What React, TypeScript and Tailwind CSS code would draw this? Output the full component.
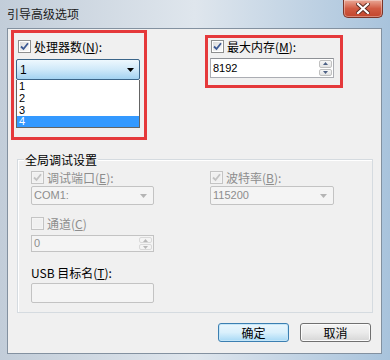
import React from "react";

interface CheckProps {
  checked?: boolean;
  disabled?: boolean;
}

// Win7 style checkbox, 13x13
function CheckBox({ checked, disabled }: CheckProps) {
  return (
    <div
      className={`w-[13px] h-[13px] shrink-0 border p-[1px] ${
        disabled ? "border-[#c4c4c4] bg-[#f4f4f4]" : "border-[#8e8f8f] bg-white"
      }`}
    >
      <div
        className={`w-full h-full ${
          disabled ? "bg-[#f0f0f0]" : "bg-gradient-to-br from-[#dcdcdc] to-[#fbfbfb]"
        }`}
      >
        {checked && (
          <svg width="9" height="9" viewBox="0 0 9 9">
            <path
              d="M1 4.5 L3.5 7 L8 1.2"
              fill="none"
              stroke={disabled ? "#c2c2c2" : "#3d5a94"}
              strokeWidth="1.8"
            />
          </svg>
        )}
      </div>
    </div>
  );
}

function Spinner({ disabled }: { disabled?: boolean }) {
  const arrow = disabled ? "#b8b8b8" : "#4d6185";
  return (
    <div className="w-[15px] h-full flex flex-col gap-[1px] p-[1px] shrink-0">
      <div
        className={`flex-1 flex items-center justify-center border rounded-[2px] ${
          disabled ? "border-[#d9d9d9] bg-[#f4f4f4]" : "border-[#c0c0c0] bg-gradient-to-b from-[#f7f7f7] to-[#e3e3e3]"
        }`}
      >
        <svg width="5" height="3" viewBox="0 0 5 3">
          <path d="M0 3 L2.5 0 L5 3 Z" fill={arrow} />
        </svg>
      </div>
      <div
        className={`flex-1 flex items-center justify-center border rounded-[2px] ${
          disabled ? "border-[#d9d9d9] bg-[#f4f4f4]" : "border-[#c0c0c0] bg-gradient-to-b from-[#f7f7f7] to-[#e3e3e3]"
        }`}
      >
        <svg width="5" height="3" viewBox="0 0 5 3">
          <path d="M0 0 L2.5 3 L5 0 Z" fill={arrow} />
        </svg>
      </div>
    </div>
  );
}

function DisabledCombo({ value, width }: { value: string; width: string }) {
  return (
    <div
      className={`${width} h-[19px] mt-[2px] flex items-center border border-[#c3c3c3] rounded-[2px] bg-[#f4f4f4] pl-[2px] pr-[6px]`}
    >
      <span className="text-[#8d8d8d] font-['Liberation_Sans',sans-serif] text-[11px] leading-[13px]">
        {value}
      </span>
      <svg className="ml-auto" width="7" height="4" viewBox="0 0 7 4">
        <path d="M0 0 L7 0 L3.5 4 Z" fill="#b4b4b4" />
      </svg>
    </div>
  );
}

export default function App() {
  return (
    <div className="w-[390px] h-[360px] overflow-hidden flex flex-col bg-gradient-to-r from-[#c2cdd9] via-[#dfe6ed] to-[#a8c3dc] font-['Noto_Sans_CJK_SC',sans-serif] text-[12px] text-black">
      {/* title bar */}
      <div className="h-[28px] shrink-0 flex items-start">
        <div className="pl-[7px] pt-[6px] leading-[15px] text-[12px] text-[#1a1a1a]">引导高级选项</div>
        <div className="ml-auto mr-[7px] w-[40px] h-[18px] rounded-b-[5px] border border-t-0 border-[#7a3428] bg-gradient-to-b from-[#e8a796] via-[#d15b43] to-[#c2452c] flex items-center justify-center shadow-[inset_0_0_0_1px_rgba(255,255,255,0.35)]">
          <svg width="14" height="11" viewBox="0 0 14 11">
            <path d="M2 1 L12 10 M12 1 L2 10" stroke="#5a2a22" strokeWidth="4" strokeLinecap="square" />
            <path d="M2 1 L12 10 M12 1 L2 10" stroke="#ffffff" strokeWidth="2.2" strokeLinecap="square" />
          </svg>
        </div>
      </div>

      {/* client area */}
      <div className="ml-[7px] mr-[8px] h-[326px] shrink-0 border border-[#8391a0] bg-[#f0f0f0] flex flex-col">
        {/* top row with highlighted boxes */}
        <div className="flex items-start h-[111px]">
          <div className="ml-[3px] mt-[1px] w-[136px] h-[110px] border-[3px] border-[#e5393b] flex flex-col">
            <div className="mt-[7px] ml-[4px] flex items-center gap-[3px] h-[13px]">
              <CheckBox checked />
              <span className="leading-[14px]">
                处理器数(<span className="underline">N</span>):
              </span>
            </div>
            <div className="mt-[6px] ml-[2px] w-[124px] h-[21px] rounded-[2px] border border-[#3b6589] bg-gradient-to-b from-[#eef8fe] via-[#cfe9f9] to-[#a3d2f1] flex items-center pl-[3px] pr-[5px]">
              <span className="font-['Liberation_Sans',sans-serif] text-[12px] leading-[14px]">1</span>
              <svg className="ml-auto" width="7" height="4" viewBox="0 0 7 4">
                <path d="M0 0 L7 0 L3.5 4 Z" fill="#000000" />
              </svg>
            </div>
            <div className="ml-[2px] w-[124px] h-[48px] border border-t-0 border-[#646464] bg-white flex flex-col font-['Liberation_Sans',sans-serif] text-[11px]">
              <div className="h-[12px] leading-[12px] pl-[2px]">1</div>
              <div className="h-[12px] leading-[12px] pl-[2px]">2</div>
              <div className="h-[12px] leading-[12px] pl-[2px]">3</div>
              <div className="h-[11px] leading-[11px] pl-[2px] bg-[#3399ff] text-white">4</div>
            </div>
          </div>

          <div className="ml-[58px] mt-[6px] w-[138px] h-[53px] border-[3px] border-[#e5393b] flex flex-col">
            <div className="mt-[2px] ml-[3px] flex items-center gap-[3px] h-[13px]">
              <CheckBox checked />
              <span className="leading-[14px]">
                最大内存(<span className="underline">M</span>):
              </span>
            </div>
            <div className="mt-[5px] ml-[2px] w-[124px] h-[20px] border border-[#abadb3] border-t-[#8e9196] bg-white flex items-center">
              <span className="pl-[2px] font-['Liberation_Sans',sans-serif] text-[11px] leading-[13px]">8192</span>
              <div className="ml-auto h-full">
                <Spinner />
              </div>
            </div>
          </div>
        </div>

        {/* group box */}
        <div className="mt-[19px] ml-[9px] w-[356px] h-[154px] border border-[#d5dbe0] shadow-[inset_1px_1px_0_#ffffff] relative flex flex-col">
          <span className="absolute left-[6px] -top-[8px] px-[1px] bg-[#f0f0f0] leading-[15px]">全局调试设置</span>

          <div className="mt-[11px] flex">
            <div className="ml-[13px] flex flex-col">
              <div className="flex items-center gap-[3px] h-[13px]">
                <CheckBox checked disabled />
                <span className="leading-[14px] text-[#8d8d8d]">
                  调试端口(<span className="underline">E</span>):
                </span>
              </div>
              <DisabledCombo value="COM1:" width="w-[123px]" />
            </div>
            <div className="ml-[56px] flex flex-col">
              <div className="flex items-center gap-[3px] h-[13px]">
                <CheckBox checked disabled />
                <span className="leading-[14px] text-[#8d8d8d]">
                  波特率(<span className="underline">B</span>):
                </span>
              </div>
              <DisabledCombo value="115200" width="w-[124px]" />
            </div>
          </div>

          <div className="ml-[13px] mt-[12px] flex items-center gap-[3px] h-[13px]">
            <CheckBox disabled />
            <span className="leading-[14px] text-[#8d8d8d]">
              通道(<span className="underline">C</span>)
            </span>
          </div>
          <div className="ml-[13px] mt-[5px] w-[123px] h-[17px] border border-[#c3c3c3] bg-[#f4f4f4] flex items-center">
            <span className="pl-[2px] text-[#8d8d8d] font-['Liberation_Sans',sans-serif] text-[11px] leading-[13px]">0</span>
            <div className="ml-auto h-full">
              <Spinner disabled />
            </div>
          </div>

          <div className="ml-[13px] mt-[14px] leading-[14px]">
            USB 目标名(<span className="underline">T</span>):
          </div>
          <div className="ml-[13px] mt-[3px] w-[123px] h-[20px] border border-[#c3c3c3] rounded-[2px] bg-[#f4f4f4]" />
        </div>

        {/* buttons */}
        <div className="mt-[10px] flex justify-end gap-[11px] pr-[10px]">
          <button className="w-[71px] h-[19px] rounded-[3px] border border-[#3c7fb1] bg-gradient-to-b from-[#eaf6fd] via-[#d9f0fc] to-[#a7d9f5] shadow-[inset_0_0_0_1px_#c5e6f8] flex items-center justify-center leading-[14px] text-[12px]">
            确定
          </button>
          <button className="w-[71px] h-[19px] rounded-[3px] border border-[#707070] bg-gradient-to-b from-[#f4f4f4] via-[#ebebeb] to-[#d6d6d6] shadow-[inset_0_0_0_1px_#fbfbfb] flex items-center justify-center leading-[14px] text-[12px]">
            取消
          </button>
        </div>
      </div>
    </div>
  );
}
